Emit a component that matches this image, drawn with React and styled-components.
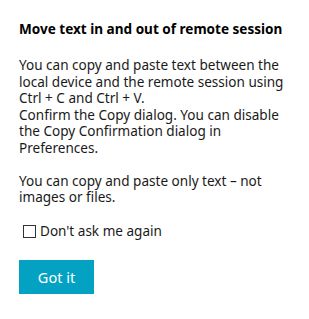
import React from "react";
import styled, { createGlobalStyle } from "styled-components";

const Global = createGlobalStyle`
  html, body { margin: 0; padding: 0; background: #ffffff; }
  body { font-family: "Noto Sans", "Open Sans", sans-serif; }
`;

const Card = styled.div`
  width: 309px;
  height: 314px;
  box-sizing: border-box;
  background: #ffffff;
  box-shadow: 0 5px 4px -2px rgba(0, 0, 0, 0.11);
  padding: 19px 21px 0 19px;
  display: flex;
  flex-direction: column;
  align-items: flex-start;
`;

const Title = styled.h2`
  margin: 0;
  font-size: 13.55px;
  line-height: 20px;
  font-weight: 700;
  color: #000000;
`;

const Body = styled.div`
  margin-top: 18px;
  font-size: 13.55px;
  line-height: 16.5px;
  color: #1a1a1a;
`;

const Para = styled.p`
  margin: 0 0 16.5px 0;
`;

const CheckRow = styled.label`
  display: flex;
  align-items: center;
  gap: 4px;
  margin-left: 4px;
  height: 18px;
  font-size: 13.55px;
  line-height: 18px;
  color: #1a1a1a;
`;

const Box = styled.span`
  width: 11px;
  height: 11px;
  border: 1px solid #333333;
  background: #ffffff;
  display: inline-block;
`;

const Button = styled.button`
  margin-top: 20px;
  width: 75px;
  height: 34px;
  border: none;
  background: #04a2c2;
  color: #ffffff;
  font-family: inherit;
  font-size: 14.5px;
  padding: 0;
  cursor: pointer;
`;

export default function App() {
  return (
    <>
      <Global />
      <Card>
        <Title>Move text in and out of remote session</Title>
        <Body>
          <Para>
            You can copy and paste text between the local device and the remote
            session using Ctrl + C and Ctrl + V.
            <br />
            Confirm the Copy dialog. You can disable the Copy Confirmation
            dialog in Preferences.
          </Para>
          <Para>You can copy and paste only text – not images or files.</Para>
        </Body>
        <CheckRow>
          <Box />
          Don't ask me again
        </CheckRow>
        <Button>Got it</Button>
      </Card>
    </>
  );
}
